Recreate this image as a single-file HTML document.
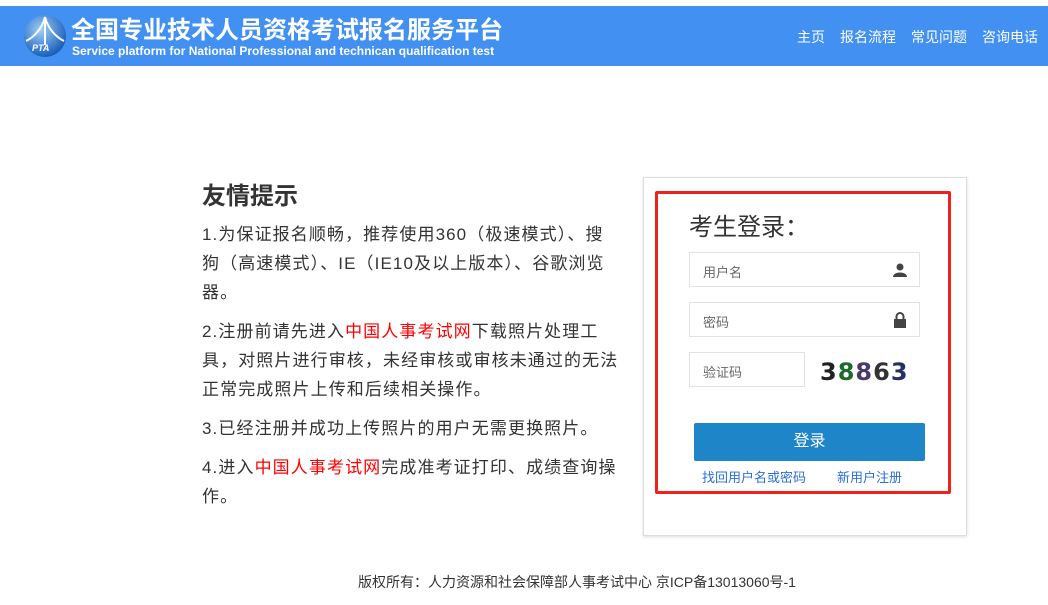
<!DOCTYPE html>
<html><head><meta charset="utf-8"><style>
*{margin:0;padding:0;box-sizing:border-box}
body{width:1048px;height:605px;background:#fff;font-family:"Liberation Sans","Noto Sans CJK SC",sans-serif;position:relative;overflow:hidden}
.hd{position:absolute;left:0;top:6px;width:1048px;height:60px;background:#4190f2}
.t1{position:absolute;left:71px;top:4px;color:#fff;font-size:24px;font-weight:bold}
.t2{position:absolute;left:72px;top:38px;color:#fff;font-size:12px;font-weight:bold}
.nav{position:absolute;right:10px;top:21px;color:#fff;font-size:14px}
.nav span{margin-left:15px}
.tip{position:absolute;left:202px;top:176px;width:440px;color:#333;white-space:nowrap}
.tip h2{font-size:24px;font-weight:bold;margin-bottom:9px}
.tip p{font-size:17px;line-height:29px;margin-bottom:10px;letter-spacing:1.1px}
.r{color:#f00}
.box{position:absolute;left:643px;top:177px;width:324px;height:359px;border:1px solid #ddd;box-shadow:0 1px 3px #ddd}
.red{position:absolute;left:655px;top:191px;width:296px;height:303px;border:3px solid #f0201a;border-radius:2px}
.lt{position:absolute;left:689px;top:207px;font-size:24px;color:#333}
.in{position:absolute;left:689px;width:231px;height:35px;border:1px solid #e2e2e2;font-size:13px;color:#666;padding:9px 0 0 13px}
.btn{position:absolute;left:694px;top:423px;width:231px;height:38px;background:#1e86c8;border-radius:2px;color:#fff;font-size:16px;text-align:center;line-height:38px}
.lk{position:absolute;top:467px;font-size:13px;color:#2a6fd8}
.ft{position:absolute;left:358px;top:572px;font-size:14px;color:#333}
</style></head><body>
<div class="hd">
<svg style="position:absolute;left:22px;top:5px" width="46" height="48" viewBox="0 0 46 48"><defs><radialGradient id="g" cx="40%" cy="35%" r="65%"><stop offset="0" stop-color="#9fd0ff"/><stop offset="1" stop-color="#1a5fb8"/></radialGradient></defs><circle cx="23" cy="25" r="21" fill="url(#g)"/><path d="M23 6 C20 18 12 26 4 30 M23 6 C26 18 34 26 42 30 M23 10 L23 34" stroke="#fff" stroke-width="2" fill="none"/><text x="10" y="40" font-size="9" font-weight="bold" font-style="italic" fill="#fff">PTA</text></svg>
<div class="t1">全国专业技术人员资格考试报名服务平台</div>
<div class="t2">Service platform for National Professional and technican qualification test</div>
<div class="nav"><span>主页</span><span>报名流程</span><span>常见问题</span><span>咨询电话</span></div>
</div>
<div class="tip"><h2>友情提示</h2>
<p>1.为保证报名顺畅，推荐使用360（极速模式）、搜<br>狗（高速模式）、IE（IE10及以上版本）、谷歌浏览<br>器。</p>
<p>2.注册前请先进入<span class="r">中国人事考试网</span>下载照片处理工<br>具，对照片进行审核，未经审核或审核未通过的无法<br>正常完成照片上传和后续相关操作。</p>
<p>3.已经注册并成功上传照片的用户无需更换照片。</p>
<p>4.进入<span class="r">中国人事考试网</span>完成准考证打印、成绩查询操<br>作。</p></div>
<div class="box"></div>
<div class="red"></div>
<div class="lt">考生登录：</div>
<div class="in" style="top:252px">用户名<svg style="position:absolute;right:12px;top:10px" width="14" height="14" viewBox="0 0 14 14"><circle cx="7" cy="4" r="3.5" fill="#444"/><path d="M0 14 C0 8 14 8 14 14Z" fill="#444"/></svg></div>
<div class="in" style="top:302px">密码<svg style="position:absolute;right:12px;top:9px" width="14" height="16" viewBox="0 0 14 16"><path d="M3.5 7 V4.5 a3.5 3.5 0 0 1 7 0 V7" stroke="#444" stroke-width="2" fill="none"/><rect x="1" y="7" width="12" height="9" fill="#444"/></svg></div>
<div class="in" style="top:352px;width:116px">验证码</div>
<div style="position:absolute;left:820px;top:358px;font-size:24px;font-weight:bold;letter-spacing:1px;font-family:'DejaVu Sans',sans-serif"><span style="color:#222">3</span><span style="color:#1d6b2a">8</span><span style="color:#4a3a6b">8</span><span style="color:#333">6</span><span style="color:#223066">3</span></div>
<div class="btn">登录</div>
<div class="lk" style="left:702px">找回用户名或密码</div>
<div class="lk" style="left:837px">新用户注册</div>
<div class="ft">版权所有：人力资源和社会保障部人事考试中心 京ICP备13013060号-1</div>
</body></html>
